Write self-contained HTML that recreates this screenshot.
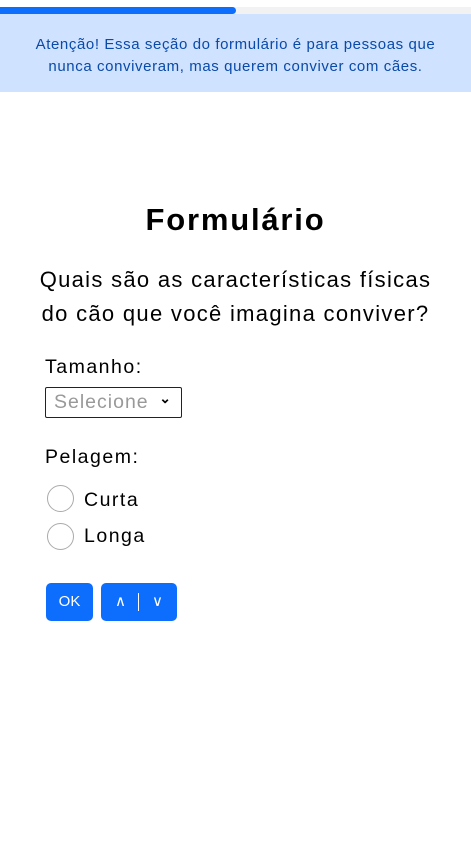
<!DOCTYPE html>
<html><head><meta charset="utf-8"><style>
*{margin:0;padding:0;box-sizing:border-box}
body{width:471px;height:855px;background:#fff;font-family:"Liberation Sans",sans-serif;color:#000;position:relative;overflow:hidden}
.track{position:absolute;left:0;top:7px;width:471px;height:7px;background:#f2f2f2}
.bar{position:absolute;left:0;top:7px;width:236px;height:7px;background:#0d6efd;border-radius:0 4px 4px 0}
.alert{position:absolute;left:0;top:14px;width:471px;height:78px;background:#cfe2ff;color:#0a4aa8;font-size:15px;letter-spacing:0.6px;line-height:22px;text-align:center;padding-top:20px}
h1{position:absolute;top:202px;width:100%;text-align:center;font-size:31px;letter-spacing:1.8px;font-weight:bold}
.q{position:absolute;top:263px;width:100%;text-align:center;font-size:22px;letter-spacing:1.3px;line-height:34px}
.lbl{position:absolute;left:45px;font-size:19.5px;letter-spacing:1.5px}
.sel{position:absolute;left:45px;top:387px;width:137px;height:31px;border:1px solid #222;border-radius:2px;color:#999;font-size:19.5px;letter-spacing:1px;padding:3px 0 0 8px}
.sel span{position:absolute;right:9px;top:2px;color:#000;font-size:14px;font-weight:bold}
.r{position:absolute;left:47px;width:27px;height:27px;border:1px solid #aaa;border-radius:50%}
.btn{position:absolute;top:583px;height:38px;background:#0d6efd;border-radius:5px;color:#fff;font-size:15px;text-align:center;line-height:38px}
</style></head><body>
<div class="track"></div><div class="bar"></div>
<div class="alert">Atenção! Essa seção do formulário é para pessoas que<br>nunca conviveram, mas querem conviver com cães.</div>
<h1>Formulário</h1>
<div class="q">Quais são as características físicas<br>do cão que você imagina conviver?</div>
<div class="lbl" style="top:356px">Tamanho:</div>
<div class="sel">Selecione<span>⌄</span></div>
<div class="lbl" style="top:446px">Pelagem:</div>
<div class="r" style="top:485px"></div><div class="lbl" style="left:84px;top:489px">Curta</div>
<div class="r" style="top:523px"></div><div class="lbl" style="left:84px;top:525px">Longa</div>
<div class="btn" style="left:46px;width:47px">OK</div>
<div class="btn" style="left:101px;width:76px"><span style="position:absolute;left:14px">∧</span><span style="position:absolute;left:37px;top:10px;width:1px;height:18px;background:#fff"></span><span style="position:absolute;left:51px">∨</span></div>
</body></html>
